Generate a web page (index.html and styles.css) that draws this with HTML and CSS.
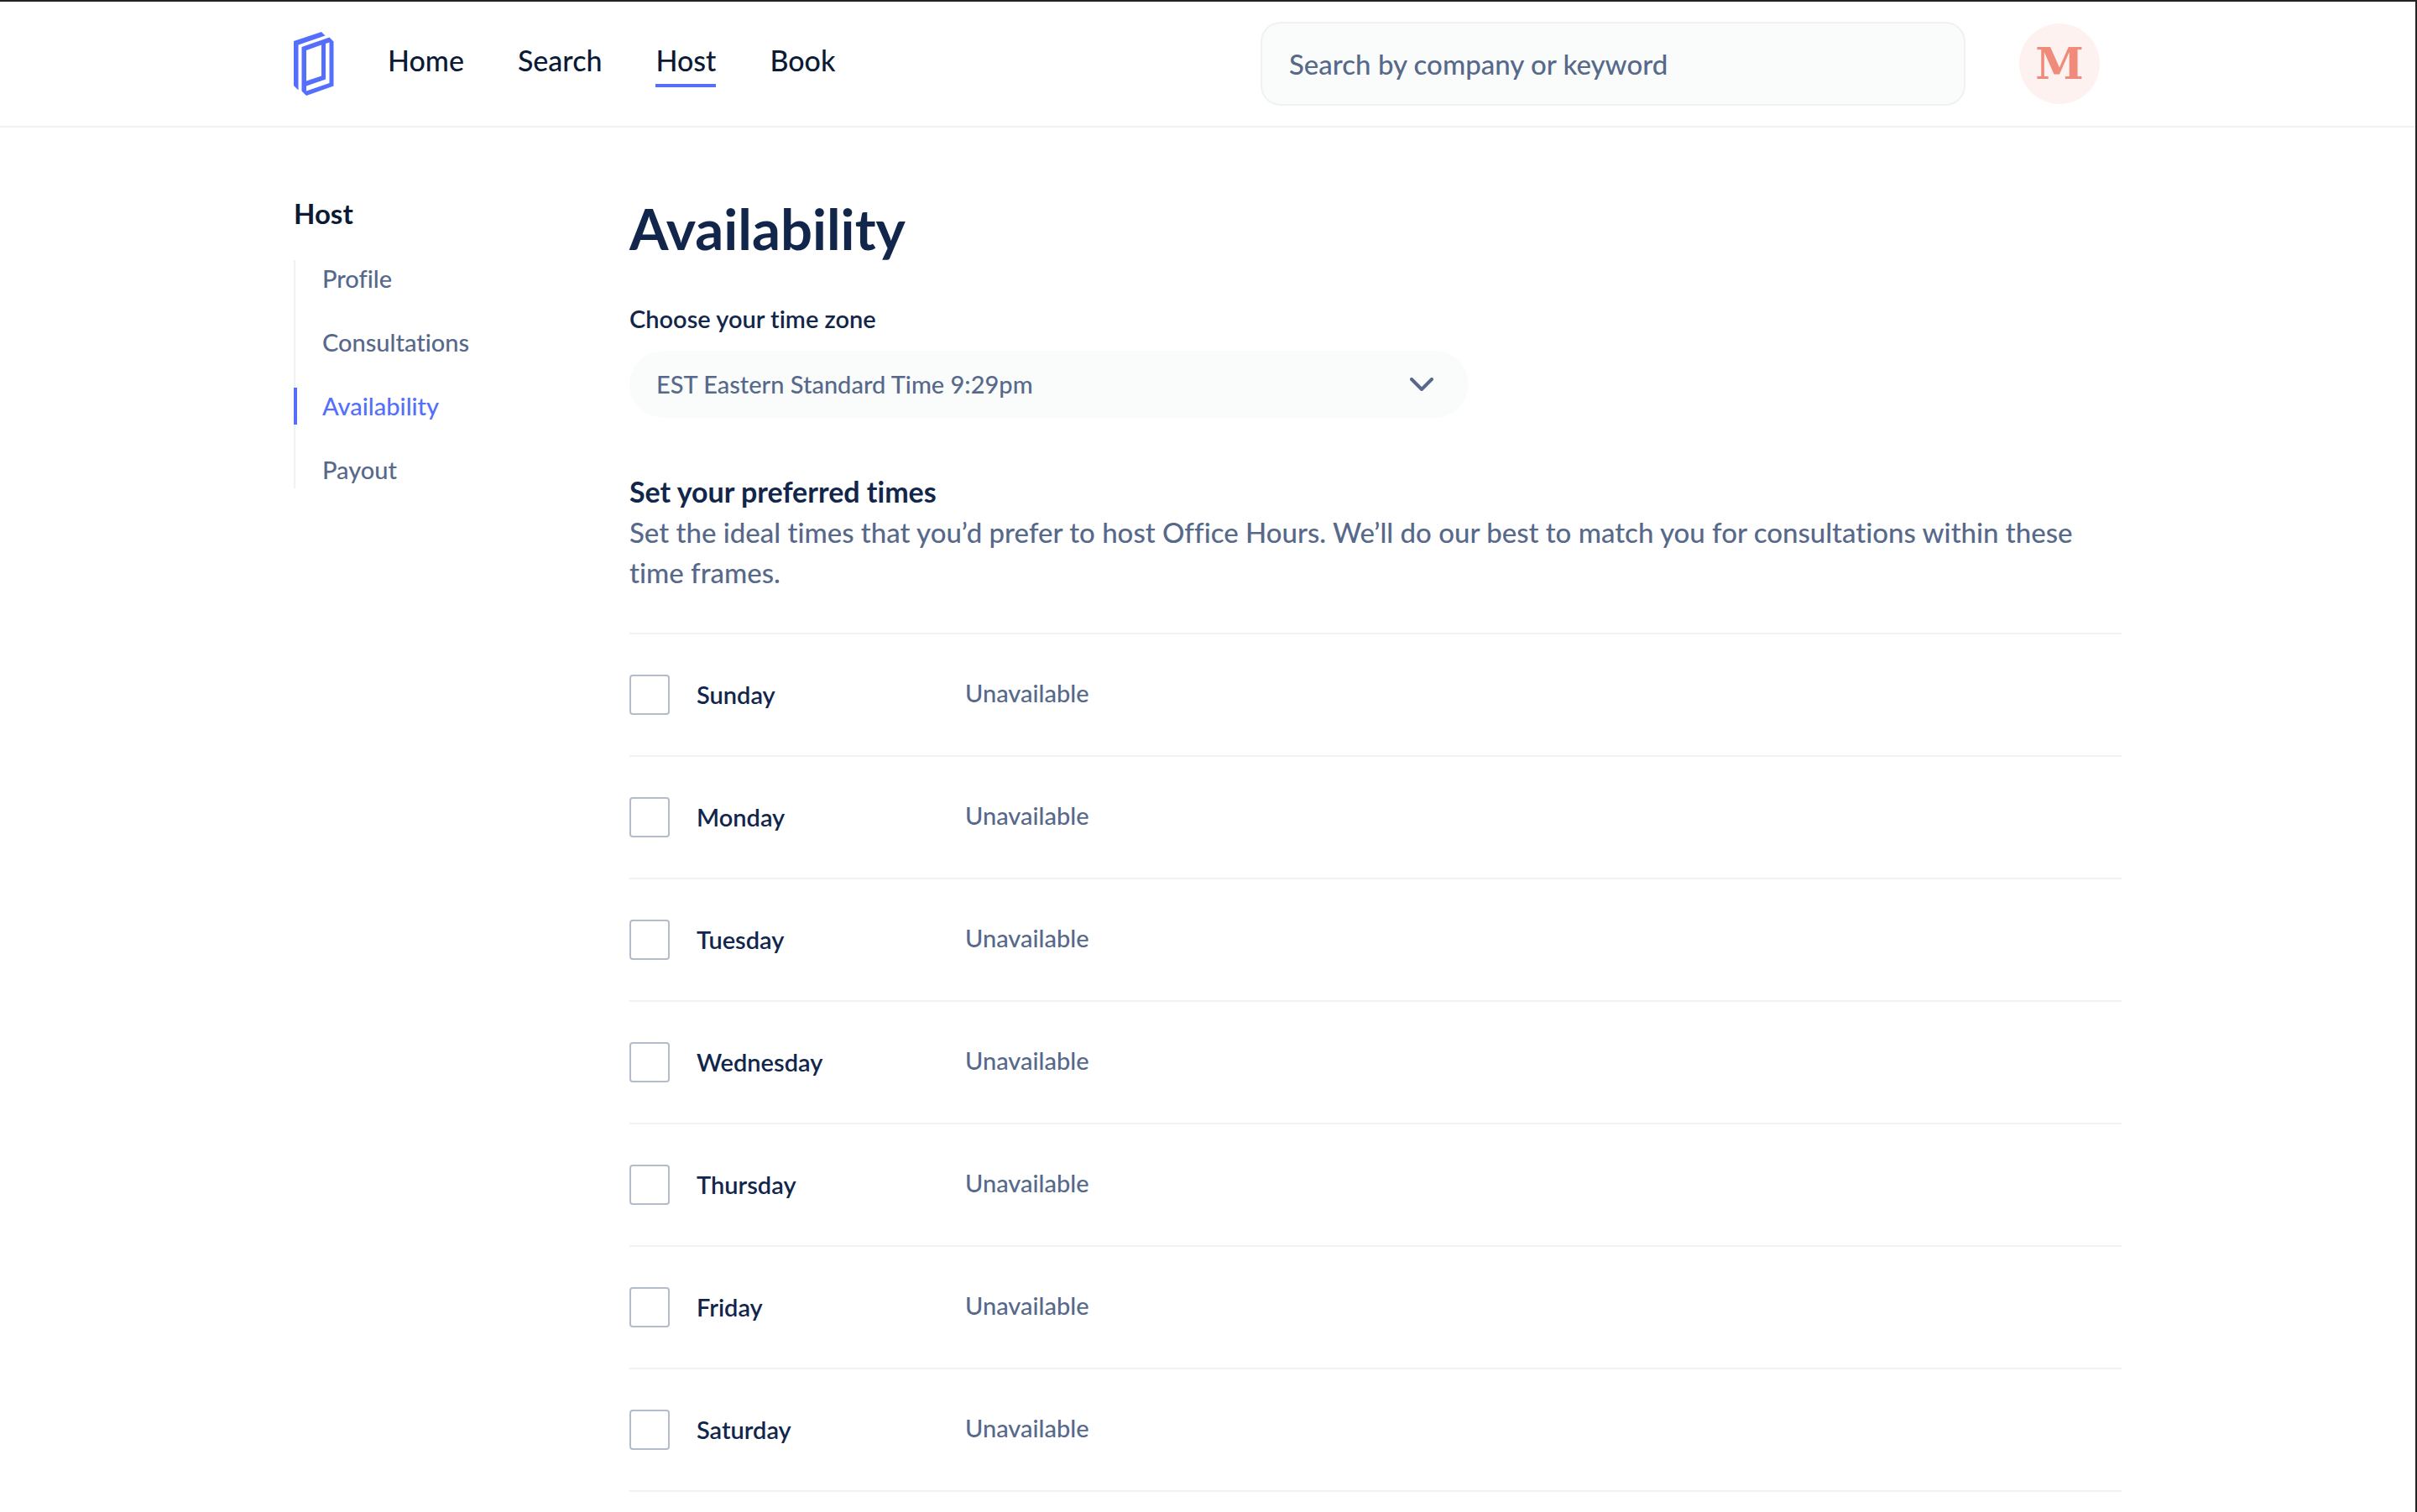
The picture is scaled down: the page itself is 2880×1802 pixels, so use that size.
FILE: index.html
```html
<!DOCTYPE html>
<html lang="en">
<head>
  <meta charset="utf-8">
  <meta name="viewport" content="width=device-width, initial-scale=1">
  <title>Availability</title>
  <link rel="stylesheet" href="styles.css">
</head>
<body>
  <header class="site-header">
    <div class="container header-inner">
      <a class="logo" href="#" aria-label="Office Hours">
        <svg width="48" height="76" viewBox="0 0 48 76" fill="#546ffb" aria-hidden="true">
          <path d="M0 11 33 0 37.500 4.500 5.500 15.500V69.500L0 64Z"/>
          <path fill-rule="evenodd" d="M9.500 18 42.500 6.500 47.500 11.500V64.500L15 76 9.500 70.500ZM15 22V58.500L33 52.500V15.500ZM38 14V56.500L15 64.500V70.500L42.500 61V12.500Z"/>
        </svg>
      </a>
      <nav class="main-nav" aria-label="Main">
        <a class="nav-link" href="#">Home</a>
        <a class="nav-link" href="#">Search</a>
        <a class="nav-link nav-link-active" href="#" aria-current="page">Host</a>
        <a class="nav-link" href="#">Book</a>
      </nav>
      <input class="search" type="search" placeholder="Search by company or keyword" aria-label="Search by company or keyword">
      <button class="avatar" type="button">M</button>
    </div>
  </header>

  <div class="container page">
    <aside class="sidebar">
      <h2 class="sidebar-title">Host</h2>
      <ul class="side-nav">
        <li><a class="side-link" href="#">Profile</a></li>
        <li><a class="side-link" href="#">Consultations</a></li>
        <li><a class="side-link side-link-active" href="#" aria-current="page">Availability</a></li>
        <li><a class="side-link" href="#">Payout</a></li>
      </ul>
    </aside>

    <main class="content">
      <h1 class="page-title">Availability</h1>

      <label class="field-label" for="timezone">Choose your time zone</label>
      <div class="select-wrap">
        <select class="select" id="timezone">
          <option>EST Eastern Standard Time 9:29pm</option>
        </select>
        <svg class="chevron" width="28" height="16" viewBox="0 0 28 16" fill="none" stroke="#57698a" stroke-width="4" stroke-linecap="round" stroke-linejoin="round" aria-hidden="true"><path d="M2 2 14 14 26 2"/></svg>
      </div>

      <h2 class="section-title">Set your preferred times</h2>
      <p class="section-text">Set the ideal times that you’d prefer to host Office Hours. We’ll do our best to match you for consultations within these time frames.</p>

      <ul class="days">
        <li class="day"><label class="day-label"><input class="checkbox" type="checkbox">Sunday</label><span class="day-status">Unavailable</span></li>
        <li class="day"><label class="day-label"><input class="checkbox" type="checkbox">Monday</label><span class="day-status">Unavailable</span></li>
        <li class="day"><label class="day-label"><input class="checkbox" type="checkbox">Tuesday</label><span class="day-status">Unavailable</span></li>
        <li class="day"><label class="day-label"><input class="checkbox" type="checkbox">Wednesday</label><span class="day-status">Unavailable</span></li>
        <li class="day"><label class="day-label"><input class="checkbox" type="checkbox">Thursday</label><span class="day-status">Unavailable</span></li>
        <li class="day"><label class="day-label"><input class="checkbox" type="checkbox">Friday</label><span class="day-status">Unavailable</span></li>
        <li class="day"><label class="day-label"><input class="checkbox" type="checkbox">Saturday</label><span class="day-status">Unavailable</span></li>
      </ul>
    </main>
  </div>
</body>
</html>
```
FILE: styles.css
```css
:root {
  --ink: #0b1b36;
  --navy: #12264c;
  --muted: #57698a;
  --accent: #546ffb;
  --line: #eff1f2;
  --field: #fafcfb;
}

*,
*::before,
*::after {
  box-sizing: border-box;
}

body {
  margin: 0;
  min-height: 100vh;
  border-top: 2px solid #222124;
  border-right: 2px solid #222124;
  background: #fff;
  color: var(--navy);
  font-family: Lato, "Open Sans", sans-serif;
  font-size: 29px;
  font-variant-ligatures: none;
  font-weight: 500;
  line-height: 44px;
}

a {
  color: inherit;
  text-decoration: none;
}

h1,
h2,
p,
ul {
  margin: 0;
  padding: 0;
}

ul {
  list-style: none;
}

.container {
  max-width: 2242px;
  margin: 0 auto;
  padding: 0 32px;
}

/* Header */

.site-header {
  border-bottom: 2px solid var(--line);
}

.header-inner {
  display: flex;
  align-items: center;
  height: 148px;
}

.logo {
  display: flex;
  margin-right: 64px;
}

.main-nav {
  display: flex;
  gap: 64px;
  margin-right: auto;
}

.nav-link {
  padding-bottom: 4px;
  border-bottom: 4px solid transparent;
  color: var(--ink);
  font-size: 34px;
  line-height: 48px;
}

.nav-link-active {
  border-color: var(--accent);
}

.search {
  width: 840px;
  height: 100px;
  padding: 0 32px;
  border: 2px solid var(--line);
  border-radius: 24px;
  background: var(--field);
  color: var(--ink);
  font: inherit;
  font-size: 33px;
}

.search::placeholder {
  color: var(--muted);
  opacity: 1;
}

.avatar {
  width: 96px;
  height: 96px;
  margin: 0 26px 0 64px;
  padding: 0;
  border: 0;
  border-radius: 50%;
  background: #fef2f0;
  color: #f08a7a;
  font: bold 52px/96px "DejaVu Serif", serif;
}

/* Page */

.page {
  display: flex;
  padding-top: 78px;
}

.sidebar {
  flex: 0 0 400px;
}

.sidebar-title {
  margin-bottom: 32px;
  color: var(--ink);
  font-size: 33px;
  font-weight: 700;
  line-height: 48px;
}

.side-nav {
  display: flex;
  flex-direction: column;
  gap: 32px;
  box-shadow: inset 2px 0 var(--line);
}

.side-link {
  display: block;
  padding-left: 30px;
  border-left: 4px solid transparent;
  color: var(--muted);
}

.side-link-active {
  border-color: var(--accent);
  color: var(--accent);
}

.content {
  flex: 1;
  min-width: 0;
}

.page-title {
  margin-bottom: 44px;
  font-size: 67px;
  font-weight: 700;
  line-height: 84px;
}

.field-label {
  display: block;
  margin-bottom: 16px;
  font-weight: 600;
}

.select-wrap {
  display: grid;
  align-items: center;
  max-width: 1000px;
  margin-bottom: 64px;
}

.select,
.chevron {
  grid-area: 1 / 1;
}

.select {
  appearance: none;
  width: 100%;
  height: 80px;
  padding: 0 80px 0 32px;
  border: 0;
  border-radius: 40px;
  background: var(--field);
  color: var(--muted);
  font: inherit;
}

.chevron {
  justify-self: end;
  margin-right: 42px;
  pointer-events: none;
}

.section-title {
  font-size: 34px;
  font-weight: 700;
  line-height: 48px;
}

.section-text {
  margin-bottom: 48px;
  color: var(--muted);
  font-size: 33px;
  line-height: 48px;
}

.days {
  border-top: 2px solid var(--line);
}

.day {
  display: flex;
  padding: 48px 0;
  border-bottom: 2px solid var(--line);
}

.day-label {
  display: flex;
  flex: 0 0 400px;
  align-items: center;
  gap: 32px;
  font-weight: 600;
  line-height: 48px;
}

.checkbox {
  appearance: none;
  width: 48px;
  height: 48px;
  margin: 0;
  border: 2px solid #b4bbca;
  border-radius: 4px;
  background: #fff;
}

.checkbox:checked {
  border-color: var(--accent);
  background: var(--accent);
}

.day-status {
  color: var(--muted);
}
```
